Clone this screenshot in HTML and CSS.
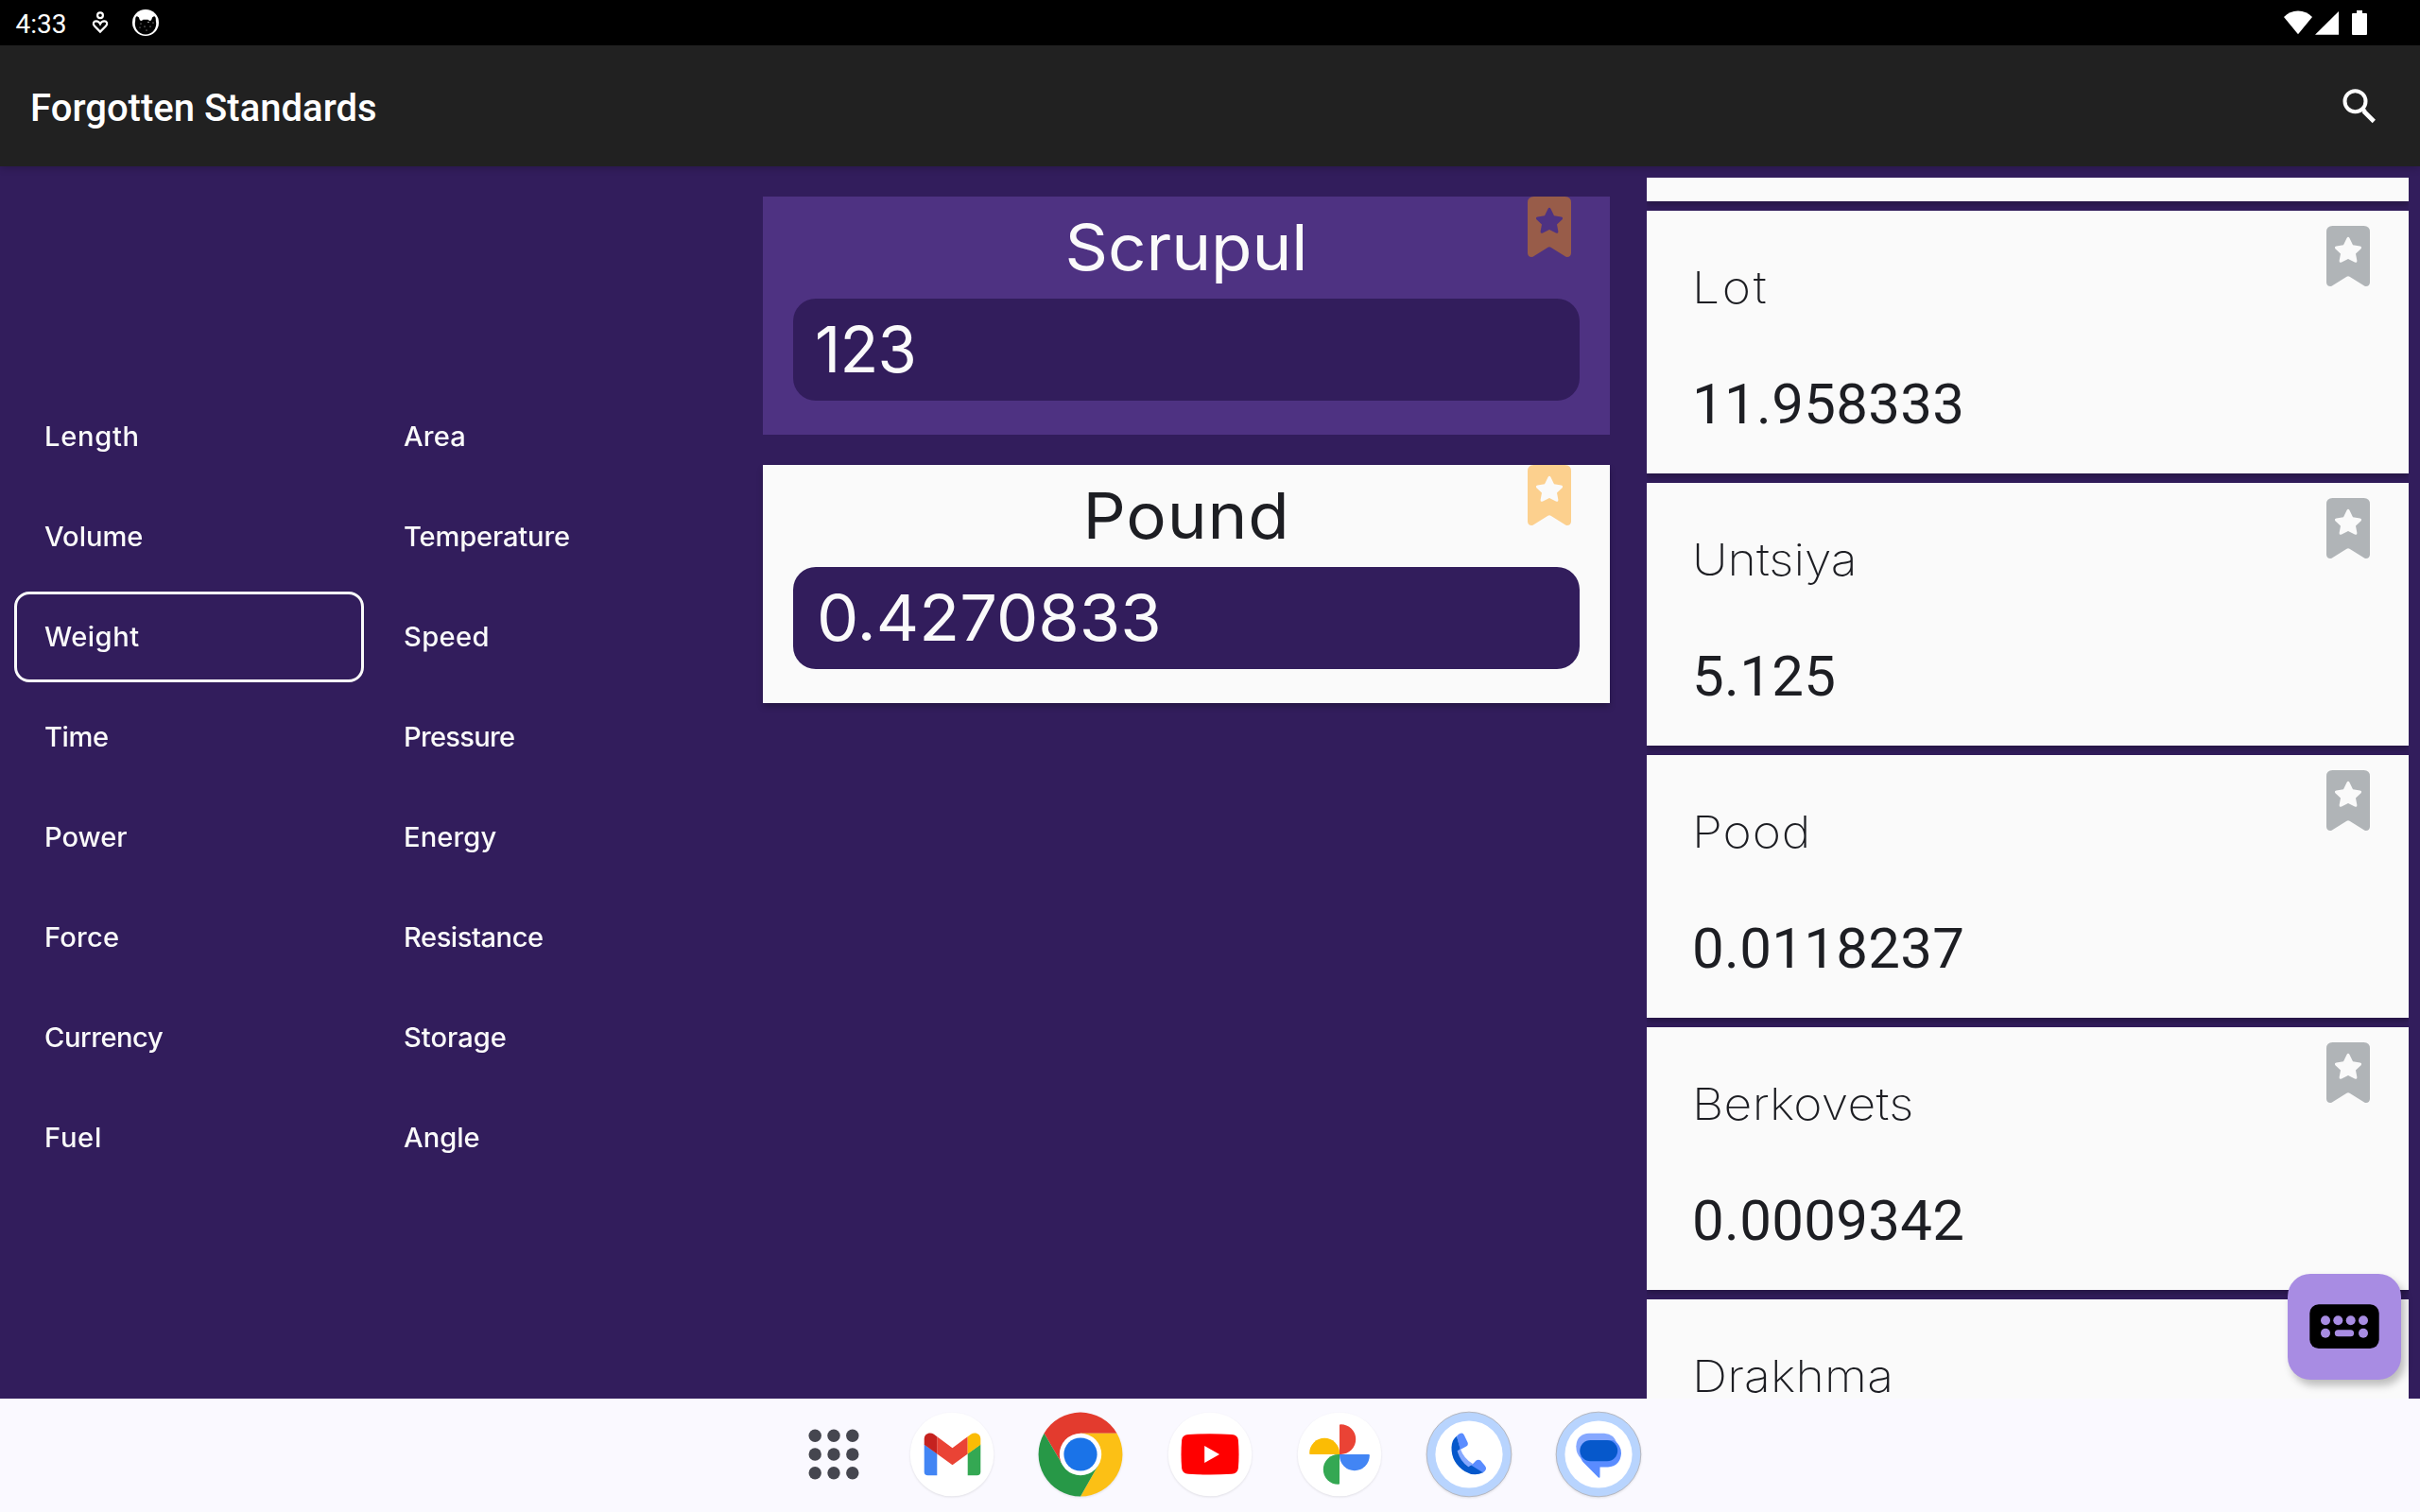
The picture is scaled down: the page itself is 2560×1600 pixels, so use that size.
FILE: index.html
```html
<!DOCTYPE html>
<html lang="en">
<head>
<meta charset="utf-8">
<title>Forgotten Standards</title>
<link rel="stylesheet" href="styles.css">
</head>
<body>
<svg class="defs" width="0" height="0" aria-hidden="true">
  <symbol id="bookmark" viewBox="0 0 46 64">
    <path fill-rule="evenodd" d="M6.500 0H39.500Q46 0 46 6.500V60Q45.500 64.500 40.500 63.800L24.500 53.800Q23 52.500 21.500 53.800L5.500 63.800Q.5 64.500 0 60V6.500Q0 0 6.500 0ZM21.500 13Q23 10.600 24.500 13L28 20.300L35.500 21.400Q38 22 36.600 24.200L31 29.600L32.400 37Q32.400 39.500 30 38.600L23 35L16 38.600Q13.600 39.500 13.600 37L15 29.600L9.400 24.200Q8 22 10.500 21.400L18 20.300Z"/>
  </symbol>
</svg>

<header class="status-bar">
  <span class="clock">4:33</span>
  <svg class="wellbeing" width="18" height="26" viewBox="0 0 18 26" fill="none" stroke="#fff" stroke-width="2.200">
    <circle cx="9" cy="5.200" r="2.900"/>
    <path d="M9 22.600L3 16.600C.6 13.600 2.200 11.300 4.700 11.300C6.800 11.300 8.300 12.700 9 14.200C9.700 12.700 11.200 11.300 13.300 11.300C15.800 11.300 17.400 13.600 15 16.600Z"/>
  </svg>
  <svg class="cat" width="28" height="28" viewBox="0 0 28 28">
    <circle cx="14" cy="14" r="14" fill="#fff"/>
    <path fill="#000" d="M3.200 12Q2.900 7.500 5 7.200L6.800 8.200L8 11.400L9.800 12L11.500 10.800H16.500L18.200 12L20 11.400L21.200 8.200L23 7.200Q25.100 7.500 24.800 12A11.200 11.400 0 1 1 3.200 12Z"/>
    <g fill="#ddd"><circle cx="9" cy="15" r=".6"/><circle cx="17" cy="13.500" r=".7"/><circle cx="13" cy="18" r=".6"/><circle cx="19" cy="18" r=".6"/><circle cx="8" cy="19" r=".5"/><circle cx="15" cy="22" r=".6"/><circle cx="22" cy="14" r=".6"/></g>
  </svg>
  <svg class="system" width="90" height="28" viewBox="2415 10 90 28" fill="#fff">
    <path d="M2416 18Q2422 11.500 2431 11.500T2446 18L2431 36.300Z"/>
    <path d="M2449 36.700L2474 12V36.700Z"/>
    <path d="M2493 11H2499V14H2503Q2504 14 2504 15V36Q2504 37 2503 37H2489Q2488 37 2488 36V15Q2488 14 2489 14H2493Z"/>
  </svg>
</header>

<div class="toolbar">
  <h1>Forgotten Standards</h1>
  <svg class="search" width="38" height="38" viewBox="0 0 38 38" fill="none" stroke="#fff" stroke-width="4">
    <circle cx="14.500" cy="14.200" r="11"/>
    <path d="M23.300 24.500L34.300 35.500" stroke-width="4.600"/>
    <path d="M22 22L25 25" stroke-width="4"/>
  </svg>
</div>

<main class="content">
  <nav class="categories">
    <a class="w-length"><span>Length</span></a><a class="w-area"><span>Area</span></a>
    <a class="w-volume"><span>Volume</span></a><a class="w-temperature"><span>Temperature</span></a>
    <a class="w-weight selected"><span>Weight</span></a><a class="w-speed"><span>Speed</span></a>
    <a class="w-time"><span>Time</span></a><a class="w-pressure"><span>Pressure</span></a>
    <a class="w-power"><span>Power</span></a><a class="w-energy"><span>Energy</span></a>
    <a class="w-force"><span>Force</span></a><a class="w-resistance"><span>Resistance</span></a>
    <a class="w-currency"><span>Currency</span></a><a class="w-storage"><span>Storage</span></a>
    <a class="w-fuel"><span>Fuel</span></a><a class="w-angle"><span>Angle</span></a>
  </nav>

  <section class="converter">
    <article class="panel active">
      <svg class="mark" width="46" height="64"><use href="#bookmark"/></svg>
      <h2 class="w-scrupul">Scrupul</h2>
      <div class="field input">123</div>
    </article>
    <article class="panel">
      <svg class="mark" width="46" height="64"><use href="#bookmark"/></svg>
      <h2 class="w-pound">Pound</h2>
      <div class="field output"><span>0.4270833</span></div>
    </article>
  </section>

  <section class="results">
    <article class="unit tail"></article>
    <article class="unit">
      <svg class="mark" width="46" height="64"><use href="#bookmark"/></svg>
      <h3 class="w-lot">Lot</h3><p>11.958333</p>
    </article>
    <article class="unit">
      <svg class="mark" width="46" height="64"><use href="#bookmark"/></svg>
      <h3>Untsiya</h3><p>5.125</p>
    </article>
    <article class="unit">
      <svg class="mark" width="46" height="64"><use href="#bookmark"/></svg>
      <h3 class="w-pood">Pood</h3><p>0.0118237</p>
    </article>
    <article class="unit">
      <svg class="mark" width="46" height="64"><use href="#bookmark"/></svg>
      <h3 class="w-berkovets">Berkovets</h3><p>0.0009342</p>
    </article>
    <article class="unit last">
      <h3 class="w-drakhma">Drakhma</h3>
    </article>
  </section>

  <button class="keyboard" aria-label="Keyboard">
    <svg width="120" height="112" viewBox="0 0 120 112">
      <rect x="23.300" y="32.300" width="73.400" height="46.700" rx="9.500"/>
      <g fill="#a88ce3">
        <circle cx="40" cy="49.300" r="5"/><circle cx="53.300" cy="49.300" r="5"/><circle cx="66.700" cy="49.300" r="5"/><circle cx="80" cy="49.300" r="5"/>
        <circle cx="40" cy="62.700" r="5"/><rect x="49.800" y="59.200" width="20.300" height="7" rx="3.500"/><circle cx="80" cy="62.700" r="5"/>
      </g>
    </svg>
  </button>
</main>

<footer class="taskbar">
  <svg class="apps" width="54" height="54" viewBox="0 0 54 54" fill="#45464f">
    <circle cx="7.200" cy="7.200" r="6.700"/><circle cx="27" cy="7.200" r="6.700"/><circle cx="46.800" cy="7.200" r="6.700"/>
    <circle cx="7.200" cy="27" r="6.700"/><circle cx="27" cy="27" r="6.700"/><circle cx="46.800" cy="27" r="6.700"/>
    <circle cx="7.200" cy="46.800" r="6.700"/><circle cx="27" cy="46.800" r="6.700"/><circle cx="46.800" cy="46.800" r="6.700"/>
  </svg>
  <svg class="app" width="92" height="92" viewBox="0 0 92 92">
    <circle cx="46" cy="46" r="44.300" fill="#fff"/>
    <path fill="#4285f4" d="M16.700 35.500L30.300 45.200V68.200H20.500Q16.700 68.200 16.700 64.400Z"/>
    <path fill="#34a853" d="M76.300 35.500L62.700 45.200V68.200H72.500Q76.300 68.200 76.300 64.400Z"/>
    <path fill="#ea4335" d="M30.300 27.200L46.500 39.200L62.700 27.200V45.500L46.500 57.200L30.300 45.500Z"/>
    <path fill="#c5221f" d="M16.700 35.800V29.800C16.700 23.600 23 21.900 27 24.700L30.300 27.200V45.500Z"/>
    <path fill="#fbbc04" d="M76.300 35.800V29.800C76.300 23.600 70 21.900 66 24.700L62.700 27.200V45.500Z"/>
  </svg>
  <svg class="app" width="92" height="92" viewBox="0 0 92 92">
    <g transform="translate(46 46)">
      <path fill="#e33b2e" d="M-38.500 -22.200A44.500 44.500 0 0 1 38.500 -22.200H0L-19 11Z"/>
      <path fill="#fcc015" d="M38.500 -22.200A44.500 44.500 0 0 1 0 44.500L19 11L0 -22.200Z"/>
      <path fill="#279847" d="M0 44.500A44.500 44.500 0 0 1 -38.500 -22.200L-19 11L19 11Z"/>
      <circle r="22.200" fill="#fff"/><circle r="17.600" fill="#1a73e8"/>
    </g>
  </svg>
  <svg class="app" width="92" height="92" viewBox="0 0 92 92">
    <circle cx="46" cy="46" r="44.300" fill="#fff"/>
    <path fill="#f00" d="M23 25Q46 23.600 69 25Q75.300 25.500 75.900 31Q77.100 46 75.900 60.500Q75.300 66.300 69 66.800Q46 68.200 23 66.800Q16.700 66.300 16.100 60.500Q14.900 46 16.100 31Q16.700 25.500 23 25Z"/>
    <path fill="#fff" d="M40.200 36.900L56 45.900L40.200 54.900Z"/>
  </svg>
  <svg class="app" width="92" height="92" viewBox="0 0 92 92">
    <circle cx="46" cy="46" r="44.300" fill="#fff"/>
    <path fill="#ea4335" d="M46 15Q46 14.200 47.300 14.200A15.900 15.900 0 0 1 47.300 46H46Z"/>
    <path fill="#4285f4" d="M46 46H77Q77.800 46 77.800 47.300A15.900 15.900 0 0 1 46 47.300Z"/>
    <path fill="#34a853" d="M46 46V77Q46 77.800 44.700 77.800A15.900 15.900 0 0 1 44.700 46Z"/>
    <path fill="#fbbc04" d="M46 46H15Q14.200 46 14.200 44.700A15.900 15.900 0 0 1 46 44.700Z"/>
  </svg>
  <svg class="app" width="92" height="92" viewBox="0 0 92 92">
    <circle cx="46" cy="46" r="44.800" fill="#b8d4fe" stroke="#b5b7bf"/>
    <circle cx="46" cy="46" r="35.600" fill="#fff"/>
    <path fill="#86a8ff" d="M33 38L37 40.500Q40.500 50.500 50 56L47.500 61L36 52Z"/>
    <path fill="#5a8cff" d="M33 26.800Q38.500 21 40.800 25.500L44.600 33.500Q45.500 36.200 43.200 37.400L36.700 41Z"/>
    <path fill="#5a8cff" d="M47.700 58.500L53.300 52.800Q55.800 50.600 58.300 52.600L63 58.300Q66 62 60.500 65.400Z"/>
    <path fill="#0658cb" d="M33 26.800L36.700 40.300L33.700 42.300Q36.500 53.500 45.500 59.300L48.200 57.600L60.800 65.300Q51.500 70 41.500 64Q27 54.500 27.500 38.500Q28 30.500 33 26.800Z"/>
  </svg>
  <svg class="app" width="92" height="92" viewBox="0 0 92 92">
    <circle cx="46" cy="46" r="44.800" fill="#b8d4fe" stroke="#b5b7bf"/>
    <circle cx="46" cy="46" r="35.600" fill="#fff"/>
    <path fill="#86a8ff" d="M36 23.800H52Q63 24.500 65.500 35L40 50L28 51Q22.300 46 22.300 37.500Q23 24.500 36 23.800Z"/>
    <path fill="#5a8cff" d="M38 31H62Q70 36 70 45Q69 58.500 56 59.500H47.500V69.500Q47.500 71.500 45.600 70.200L29.500 54Q26.300 50 26.300 42Z"/>
    <rect x="26.300" y="30.900" width="39.900" height="22.400" rx="11.200" fill="#0658cb"/>
  </svg>
</footer>
</body>
</html>
```
FILE: styles.css
```css
* { box-sizing: border-box; }

body {
  margin: 0;
  width: 2560px;
  height: 1600px;
  overflow: hidden;
  display: flex;
  flex-direction: column;
  background: #321d5c;
  font-family: Inter, "Liberation Sans", sans-serif;
  color: #fafafa;
}

h1, h2, h3, p { margin: 0; }
svg { display: block; flex: none; }
.defs { position: absolute; }

/* System status bar */
.status-bar {
  flex: none;
  display: flex;
  align-items: flex-start;
  height: 48px;
  padding-left: 16.500px;
  background: #000;
}
.clock {
  width: 80.500px;
  padding-top: 9px;
  font: 400 28px/33px Roboto, sans-serif;
  color: #fff;
}
.wellbeing { margin-top: 11px; }
.cat { margin: 10px 0 0 25px; }
.system { margin: 10px 55px 0 auto; }

/* App toolbar */
.toolbar {
  position: relative;
  z-index: 1;
  flex: none;
  display: flex;
  align-items: center;
  justify-content: space-between;
  height: 128px;
  padding: 5px 45px 0 32px;
  background: #212121;
  box-shadow: 0 2px 8px rgba(0, 0, 0, .2);
}
.toolbar h1 { font: 500 40px/47px Roboto, sans-serif; letter-spacing: .03px; color: #fff; }
.search { margin-bottom: 6px; }

.content {
  position: relative;
  display: grid;
  grid-template-columns: 775px 967px 806px;
  height: 1304px;
}

/* Category picker */
.categories {
  display: grid;
  grid-template-columns: 370px 370px;
  grid-auto-rows: 96px;
  gap: 10px;
  align-content: center;
  padding: 10px 0 0 15px;
}
.categories a {
  display: flex;
  align-items: center;
  padding-left: 29px;
  border: 3px solid transparent;
  border-radius: 16px;
  font-size: 28px;
  line-height: 34px;
  font-weight: 500;
}
.categories span { transform: scaleX(1.04); transform-origin: left; }
.categories .selected { border-color: #fafafa; }

/* Conversion panels */
.converter {
  display: flex;
  flex-direction: column;
  gap: 32px;
  padding: 32px 39px 0 32px;
}
.panel {
  position: relative;
  height: 252px;
  padding: 13px 32px 0;
  background: #fafafa;
  color: #1d1e23;
  box-shadow: 0 4px 7px -1px rgba(0, 0, 0, .3);
}
.panel.active { background: #4e3282; color: #fafafa; box-shadow: none; }
.panel h2 {
  font-size: 67px;
  line-height: 81px;
  font-weight: 400;
  text-align: center;
  transform: scaleX(1.06);
}
.field {
  height: 108px;
  margin-top: 14px;
  padding: 13px 25px 0;
  border-radius: 24px;
  background: #321d5c;
  color: #fafafa;
  font-size: 67px;
  line-height: 81px;
}
.field.input { padding-left: 23px; letter-spacing: -.8px; }
.field span { display: inline-block; transform: scaleX(1.05); transform-origin: left; }

.mark { position: absolute; top: 0; right: 41px; fill: #fcd08e; }
.active .mark { fill: #985c49; }

/* Results list */
.results {
  display: flex;
  flex-direction: column;
  gap: 10px;
  height: 1292px;
  margin-top: 12px;
  overflow: hidden;
}
.unit {
  position: relative;
  flex: none;
  height: 278px;
  padding: 52px 48px 0;
  background: #fafafa;
  color: #1d1e23;
  box-shadow: 0 4px 6px rgba(0, 0, 0, .25);
}
.unit.tail { height: 25px; padding: 0; }
.unit .mark { top: 16px; fill: #b0b4b7; }
.unit h3 {
  font-size: 47px;
  line-height: 57px;
  font-weight: 200;
  transform: scaleX(1.1);
  transform-origin: left;
}
.unit.last { height: 105px; padding-top: 56px; }
.unit.last h3 { line-height: 49px; }
.unit p {
  margin-top: 60px;
  font: 400 60px/71px Roboto, sans-serif;
  letter-spacing: .3px;
}

.keyboard {
  position: absolute;
  right: 20px;
  bottom: 20px;
  width: 120px;
  height: 112px;
  padding: 0;
  border: 0;
  border-radius: 24px;
  background: #a88ce3;
  box-shadow: 4px 6px 8px rgba(0, 0, 0, .25);
}

/* Launcher taskbar */
.taskbar {
  position: relative;
  flex: none;
  display: flex;
  align-items: center;
  gap: 44.800px;
  height: 120px;
  padding: 0 0 2px 854.500px;
  background: #faf9ff;
}
.apps { margin-right: 7.400px; }
.app { filter: drop-shadow(0 1px 1px rgba(0, 0, 0, .1)); }

/* Tracking per label */
.w-length { letter-spacing: .66px; }
.w-area { letter-spacing: .2px; }
.w-temperature { letter-spacing: -.16px; }
.w-weight { letter-spacing: .46px; }
.w-speed { letter-spacing: .33px; }
.w-time { letter-spacing: -.4px; }
.w-pressure { letter-spacing: -.7px; }
.w-energy { letter-spacing: .1px; }
.w-force { letter-spacing: .16px; }
.w-resistance { letter-spacing: -.45px; }
.w-currency { letter-spacing: -.44px; }
.w-fuel { letter-spacing: .67px; }
.w-scrupul { letter-spacing: -.1px; }
.w-pound { letter-spacing: .78px; }
.w-lot { letter-spacing: 2.4px; }
.w-pood { letter-spacing: .8px; }
.w-berkovets { letter-spacing: .26px; }
.w-drakhma { letter-spacing: .17px; }
```
